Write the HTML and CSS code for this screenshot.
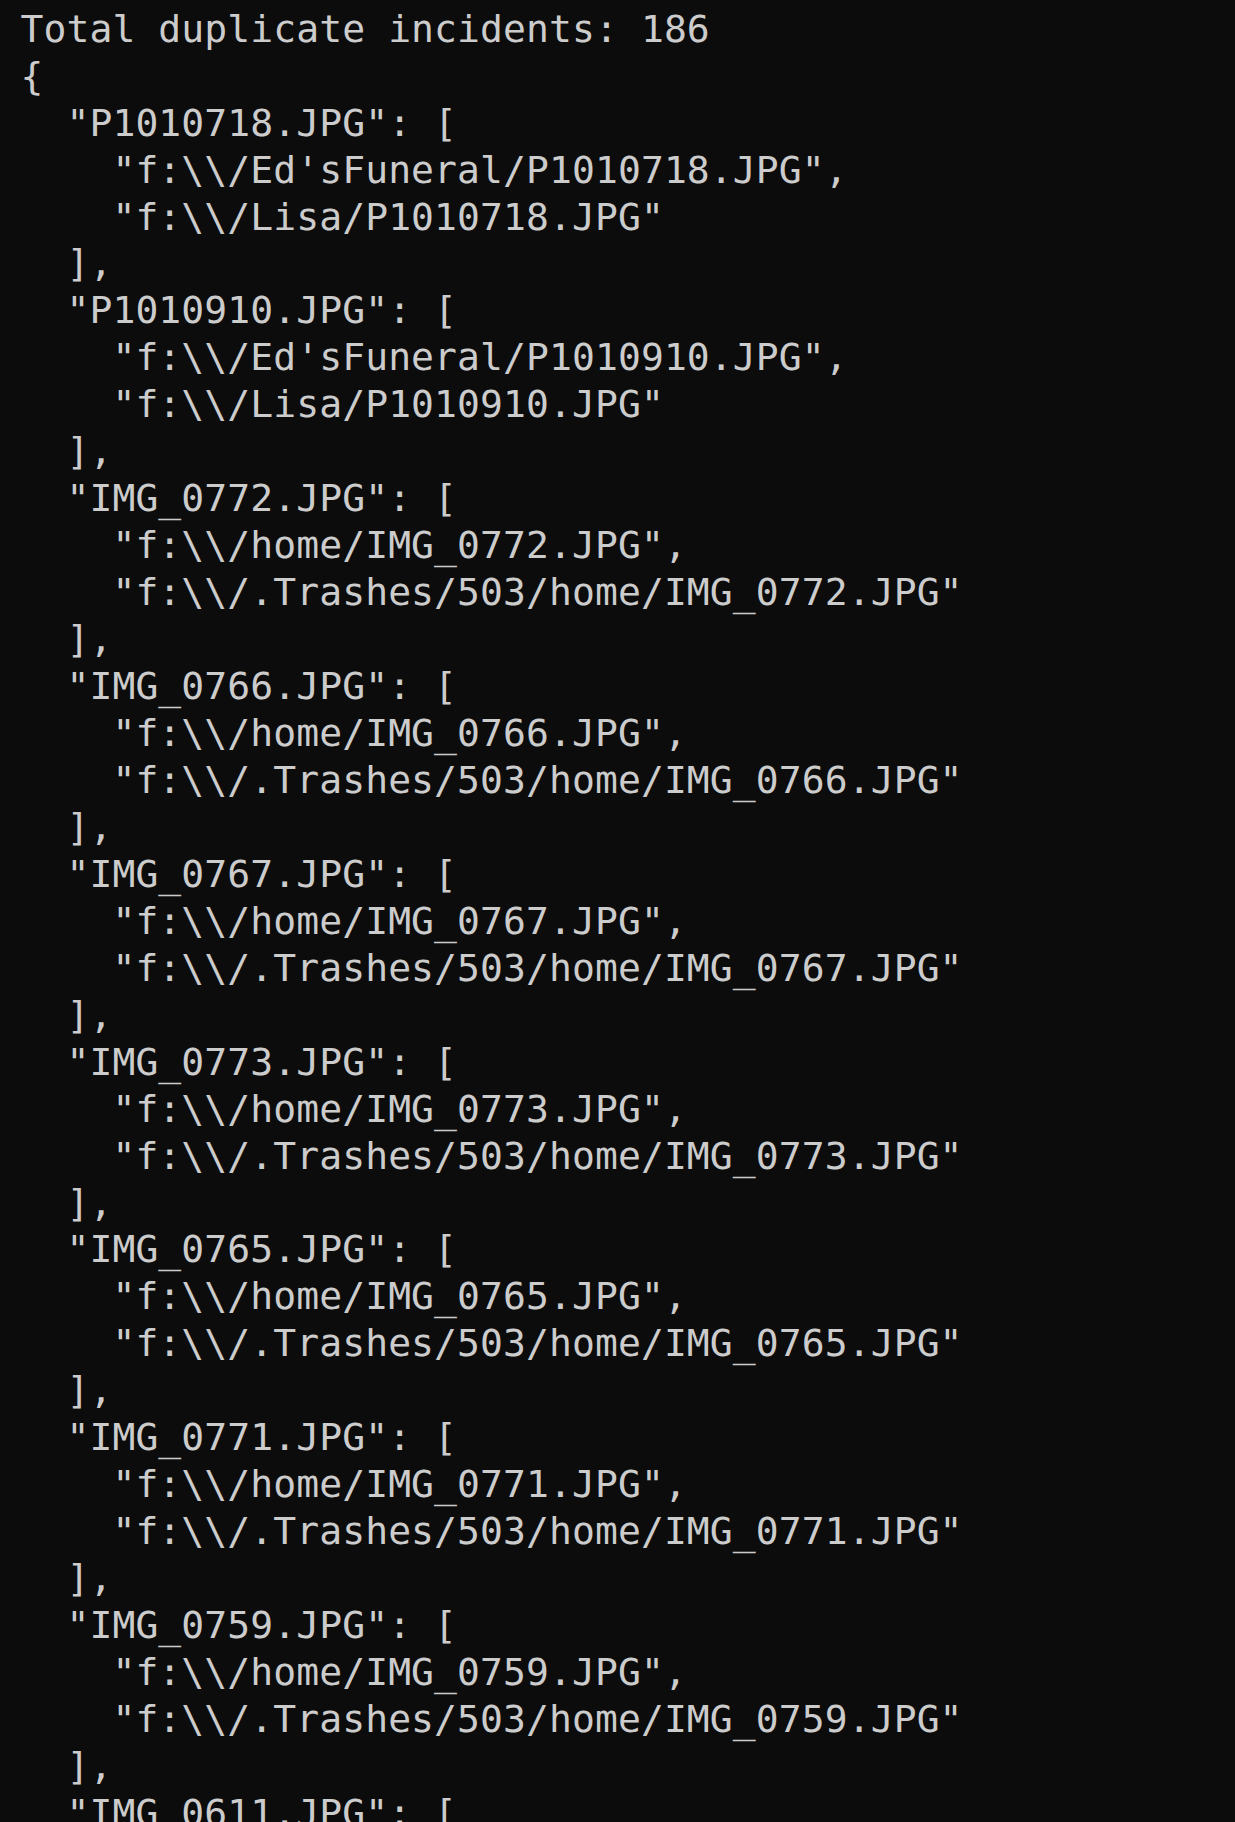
FILE: index.html
```html
<!DOCTYPE html>
<html lang="en">
<head>
<meta charset="utf-8">
<title>Terminal</title>
<link rel="stylesheet" href="styles.css">
</head>
<body>
<main class="terminal">
<pre class="output">Total duplicate incidents: 186
{
  "P1010718.JPG": [
    "f:\\/Ed'sFuneral/P1010718.JPG",
    "f:\\/Lisa/P1010718.JPG"
  ],
  "P1010910.JPG": [
    "f:\\/Ed'sFuneral/P1010910.JPG",
    "f:\\/Lisa/P1010910.JPG"
  ],
  "IMG_0772.JPG": [
    "f:\\/home/IMG_0772.JPG",
    "f:\\/.Trashes/503/home/IMG_0772.JPG"
  ],
  "IMG_0766.JPG": [
    "f:\\/home/IMG_0766.JPG",
    "f:\\/.Trashes/503/home/IMG_0766.JPG"
  ],
  "IMG_0767.JPG": [
    "f:\\/home/IMG_0767.JPG",
    "f:\\/.Trashes/503/home/IMG_0767.JPG"
  ],
  "IMG_0773.JPG": [
    "f:\\/home/IMG_0773.JPG",
    "f:\\/.Trashes/503/home/IMG_0773.JPG"
  ],
  "IMG_0765.JPG": [
    "f:\\/home/IMG_0765.JPG",
    "f:\\/.Trashes/503/home/IMG_0765.JPG"
  ],
  "IMG_0771.JPG": [
    "f:\\/home/IMG_0771.JPG",
    "f:\\/.Trashes/503/home/IMG_0771.JPG"
  ],
  "IMG_0759.JPG": [
    "f:\\/home/IMG_0759.JPG",
    "f:\\/.Trashes/503/home/IMG_0759.JPG"
  ],
  "IMG_0611.JPG": [</pre>
</main>
</body>
</html>
```
FILE: styles.css
```css
html, body {
  margin: 0;
  padding: 0;
  background: #0c0c0c;
  height: 100%;
  overflow: hidden;
}
.terminal {
  padding: 5.7px 0 0 20.5px;
  box-sizing: border-box;
  height: 100%;
  background: #0c0c0c;
}
.output {
  margin: 0;
  font-family: "DejaVu Sans Mono", monospace;
  font-size: 38px;
  letter-spacing: 0.1px;
  line-height: 46.96px;
  color: #cccccc;
  white-space: pre;
}
```
